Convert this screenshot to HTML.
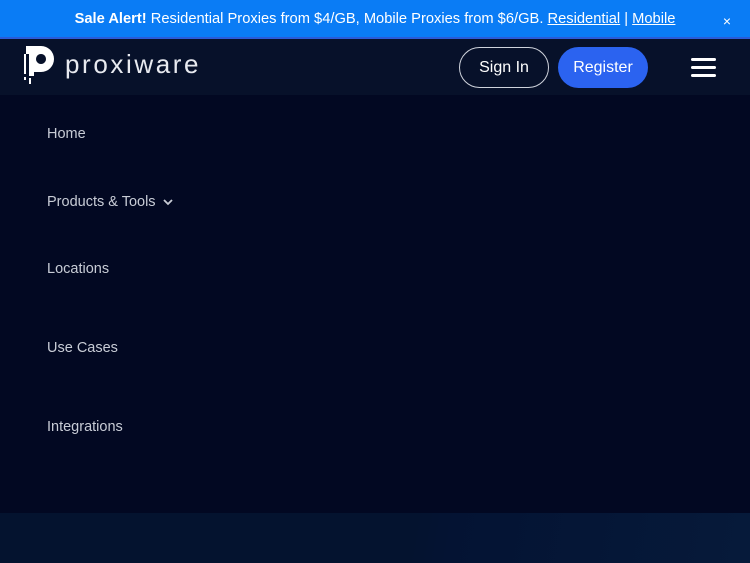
<!DOCTYPE html>
<html><head><meta charset="utf-8"><style>
*{margin:0;padding:0;box-sizing:border-box}
body{width:750px;height:563px;overflow:hidden;background:#020822;font-family:"Liberation Sans",sans-serif;position:relative}
.bar{position:absolute;left:0;top:0;width:750px;height:39px;background:#0a7cf5;color:#fff;font-size:14.7px;text-align:center;line-height:38px;border-bottom:2px solid #2a5bd8}
.bar b{font-weight:bold}
.bar u{text-decoration:underline}
.x{position:absolute;right:19px;top:2px;font-size:14px}
.hdr{position:absolute;left:0;top:39px;width:750px;height:56px;background:#07112a}
.logo{position:absolute;left:24px;top:7px}
.name{position:absolute;left:65px;top:10px;color:#e8eaf0;font-size:26px;letter-spacing:2.6px}
.btn{position:absolute;top:8px;height:41px;border-radius:21px;color:#fff;font-size:16px;line-height:39px;text-align:center}
.si{left:459px;width:90px;border:1px solid #cfd3dc}
.rg{left:558px;width:90px;background:#2b63f0;line-height:41px}
.hb{position:absolute;left:691px;top:19px;width:25px}
.hb div{height:3px;background:#fff;border-radius:2px;margin-bottom:5px}
.menu{position:absolute;left:47px;color:#c8ccd6;font-size:14.5px}
.bot{position:absolute;left:0;top:513px;width:750px;height:50px;background:linear-gradient(100deg,#04132f 0%,#04132f 55%,#041333 60%,#061a3a 100%)}
</style></head><body>
<div class="bar"><b>Sale Alert!</b> Residential Proxies from $4/GB, Mobile Proxies from $6/GB. <u>Residential</u> | <u>Mobile</u><span class="x">×</span></div>
<div class="hdr">
<svg class="logo" width="32" height="40" viewBox="0 0 32 40"><path fill-rule="evenodd" d="M2 0H17A13 13 0 0 1 17 26H10V30H5V8H2Z M17 8A5 5 0 1 0 17.01 8Z" fill="#fff"/><rect x="0" y="8" width="2" height="20" fill="#fff"/><rect x="0" y="31" width="2" height="3" fill="#fff"/><rect x="5" y="32" width="2" height="6" fill="#fff"/></svg>
<div class="name">proxiware</div>
<div class="btn si">Sign In</div>
<div class="btn rg">Register</div>
<div class="hb"><div></div><div></div><div></div></div>
</div>
<div class="menu" style="top:126px">Home</div>
<div class="menu" style="top:194px">Products &amp; Tools <svg width="10" height="8" viewBox="0 0 10 8" style="margin-left:3px"><path d="M1 2L5 6L9 2" stroke="#c8ccd6" stroke-width="1.8" fill="none"/></svg></div>
<div class="menu" style="top:261px">Locations</div>
<div class="menu" style="top:340px">Use Cases</div>
<div class="menu" style="top:419px">Integrations</div>
<div class="bot"></div>
</body></html>
